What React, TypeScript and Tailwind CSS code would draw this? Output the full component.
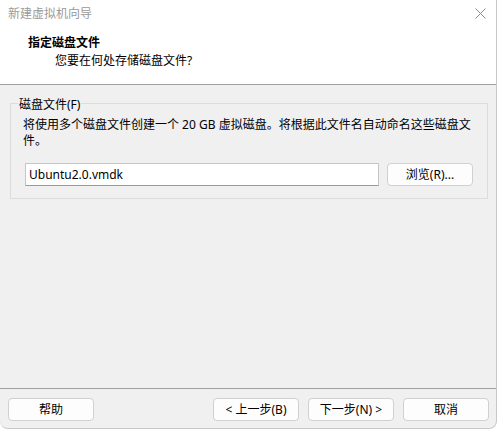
import React from 'react'

const font = {
  fontFamily: '"Noto Sans", "Noto Sans CJK SC", sans-serif',
}

function WinButton({ children, className = '' }: { children: React.ReactNode; className?: string }) {
  return (
    <button
      className={`h-[23px] w-[86px] rounded-[4px] border border-[#d0d0d0] bg-[#fdfdfd] text-[12px] leading-[20px] text-black ${className}`}
    >
      {children}
    </button>
  )
}

export default function App() {
  return (
    <div className="h-[429px] w-[499px] overflow-hidden bg-white" style={font}>
      <div className="flex h-[429px] w-[497px] flex-col rounded-b-[8px] border-r border-b border-[#c8c8c8] bg-[#f0f0f0]">
        {/* Title bar */}
        <div className="flex h-[27px] shrink-0 items-center justify-between bg-white pl-[8px] pr-[10px]">
          <span className="text-[12px] leading-[16px] text-[#9a9a9a]">新建虚拟机向导</span>
          <svg width="11" height="11" viewBox="0 0 11 11" className="mr-[0px]">
            <path d="M0.5 0.5 L10.5 10.5 M10.5 0.5 L0.5 10.5" stroke="#8a8a8a" strokeWidth="1" fill="none" />
          </svg>
        </div>

        {/* Header */}
        <div className="h-[58px] shrink-0 border-b border-[#a0a0a0] bg-white pt-[7px]">
          <div className="pl-[28px] text-[12px] font-bold leading-[18px] text-black">指定磁盘文件</div>
          <div className="pl-[55px] text-[12px] leading-[18px] text-black">您要在何处存储磁盘文件?</div>
        </div>

        {/* Body */}
        <div className="flex-1 px-[10px] pt-[8px]">
          <fieldset className="w-[478px] border border-[#dcdcdc] px-[12px] pb-[12px]">
            <legend className="ml-[-5px] px-[1px] pt-[4px] text-[12px] leading-[16px] text-black">磁盘文件(F)</legend>
            <p className="mt-[4px] text-[12px] leading-[16px] text-black">
              将使用多个磁盘文件创建一个 20 GB 虚拟磁盘。将根据此文件名自动命名这些磁盘文
              <br />
              件。
            </p>
            <div className="mt-[14px] ml-[2px] flex items-center gap-[8px]">
              <input
                readOnly
                value="Ubuntu2.0.vmdk"
                className="h-[23px] w-[354px] border border-[#c6c6c6] border-b-[#9a9a9a] bg-white px-[3px] text-[12px] text-black outline-none"
                style={font}
              />
              <WinButton className="w-[85px]">浏览(R)...</WinButton>
            </div>
          </fieldset>
        </div>

        {/* Footer */}
        <div className="h-[40px] shrink-0 border-t border-[#a0a0a0] pl-[8px] pt-[9px]">
          <div className="flex">
            <WinButton>帮助</WinButton>
            <div className="ml-[119px] flex gap-[9px]">
              <WinButton>&lt; 上一步(B)</WinButton>
              <WinButton>下一步(N) &gt;</WinButton>
              <WinButton>取消</WinButton>
            </div>
          </div>
        </div>
      </div>
    </div>
  )
}
